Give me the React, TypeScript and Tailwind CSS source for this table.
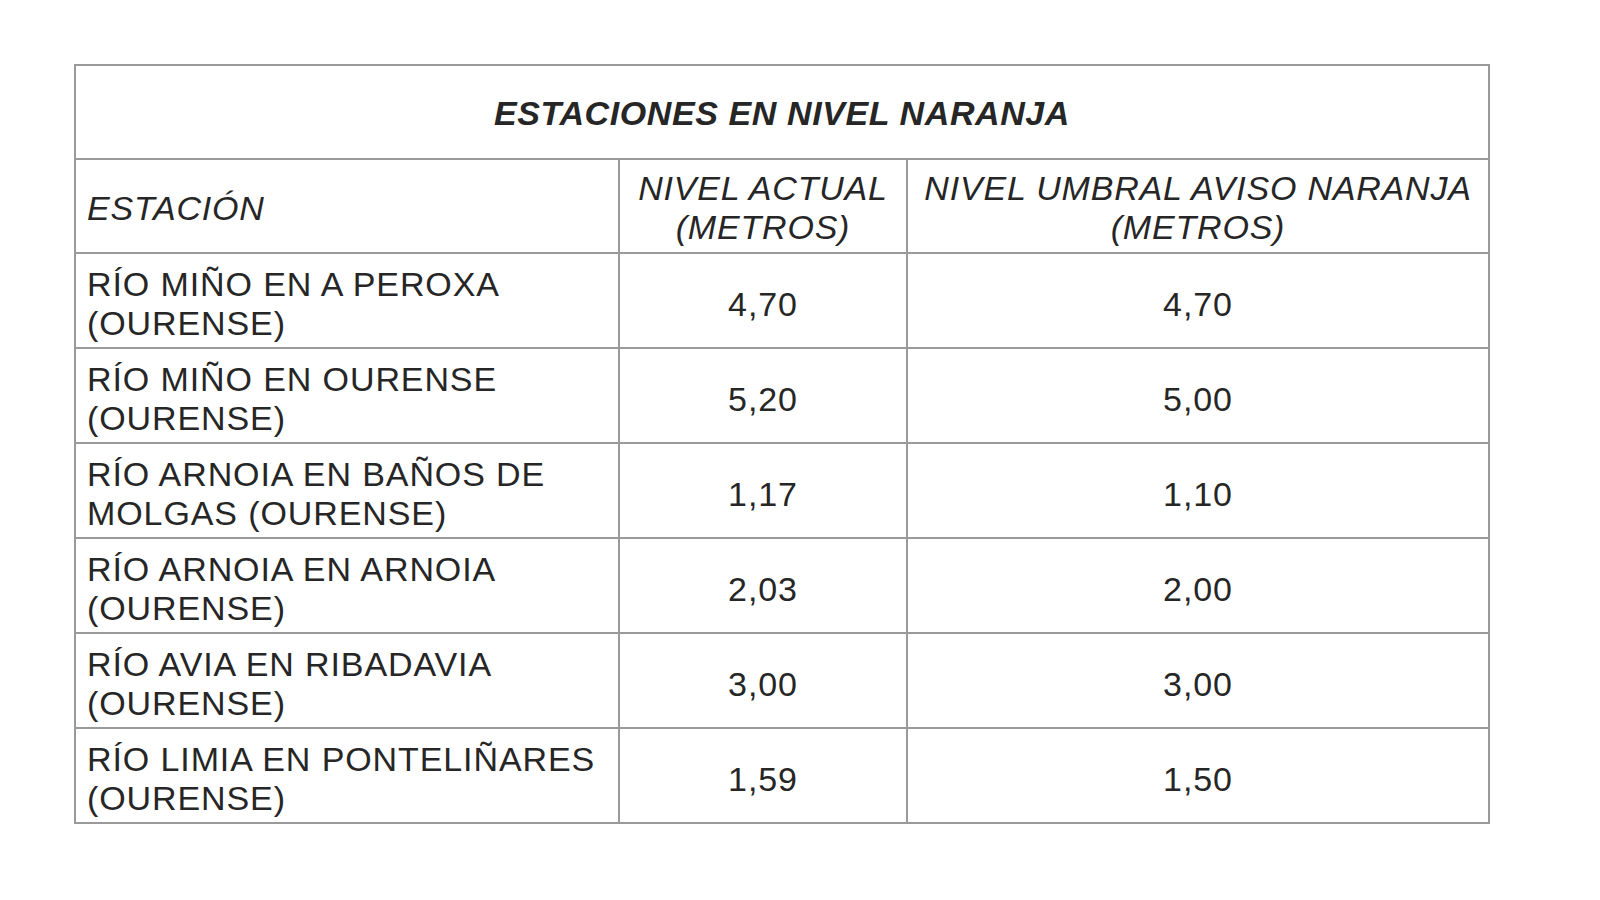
const rows = [
  { station: ['RÍO MIÑO EN A PEROXA', '(OURENSE)'], actual: '4,70', umbral: '4,70' },
  { station: ['RÍO MIÑO EN OURENSE', '(OURENSE)'], actual: '5,20', umbral: '5,00' },
  { station: ['RÍO ARNOIA EN BAÑOS DE', 'MOLGAS (OURENSE)'], actual: '1,17', umbral: '1,10' },
  { station: ['RÍO ARNOIA EN ARNOIA', '(OURENSE)'], actual: '2,03', umbral: '2,00' },
  { station: ['RÍO AVIA EN RIBADAVIA', '(OURENSE)'], actual: '3,00', umbral: '3,00' },
  { station: ['RÍO LIMIA EN PONTELIÑARES', '(OURENSE)'], actual: '1,59', umbral: '1,50' }
]

export default function App() {
  return (
    <div className="w-[1600px] h-[900px] bg-white pt-[64px] pl-[74px] font-['Liberation_Sans',Arial,sans-serif] text-[#262626]">
      <table className="border-collapse table-fixed w-[1414px]">
        <colgroup>
          <col className="w-[544px]" />
          <col className="w-[288px]" />
          <col className="w-[582px]" />
        </colgroup>
        <tbody>
          {/* Title */}
          <tr className="h-[94px]">
            <td
              colSpan={3}
              className="border-2 border-[#9a9a9a] text-center align-middle pt-[3px] text-[34px] font-bold italic tracking-[0.6px]"
            >
              ESTACIONES EN NIVEL NARANJA
            </td>
          </tr>

          {/* Header */}
          <tr className="h-[94px] text-[34px] italic leading-[39px] tracking-[0.8px]">
            <td className="border-2 border-[#9a9a9a] align-middle pl-[11px] pt-[4px]">ESTACIÓN</td>
            <td className="border-2 border-[#9a9a9a] align-middle text-center pt-[4px] whitespace-nowrap">
              NIVEL ACTUAL
              <br />
              (METROS)
            </td>
            <td className="border-2 border-[#9a9a9a] align-middle text-center pt-[4px] whitespace-nowrap">
              NIVEL UMBRAL AVISO NARANJA
              <br />
              (METROS)
            </td>
          </tr>

          {/* Data rows */}
          {rows.map((r) => (
            <tr key={r.station[0]} className="h-[95px] text-[34px] leading-[39px] tracking-[0.9px]">
              <td className="border-2 border-[#9a9a9a] align-middle pl-[11px] pt-[7px] whitespace-nowrap">
                {r.station[0]}
                <br />
                {r.station[1]}
              </td>
              <td className="border-2 border-[#9a9a9a] align-middle text-center pt-[7px]">{r.actual}</td>
              <td className="border-2 border-[#9a9a9a] align-middle text-center pt-[7px]">{r.umbral}</td>
            </tr>
          ))}
        </tbody>
      </table>
    </div>
  )
}
